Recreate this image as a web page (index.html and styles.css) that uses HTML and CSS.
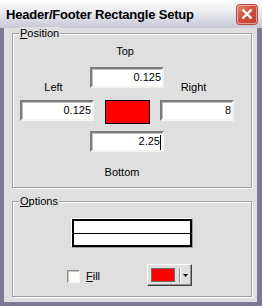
FILE: index.html
```html
<!DOCTYPE html>
<html lang="en">

<head>
    <meta charset="UTF-8">
    <title>Header/Footer Rectangle Setup</title>
    <link rel="stylesheet" href="styles.css">
</head>

<body>
    <div class="window">
        <div class="titlebar">
            <span class="title">Header/Footer Rectangle Setup</span>
            <span class="close">
                <svg width="22" height="21" viewBox="0 0 22 21">
                    <defs>
                        <linearGradient id="closeFill" x1="0" y1="0" x2="1" y2="1">
                            <stop offset="0" stop-color="#e58a78" />
                            <stop offset="0.45" stop-color="#d4513f" />
                            <stop offset="1" stop-color="#bb3a2c" />
                        </linearGradient>
                    </defs>
                    <rect x="0.5" y="0.5" width="21" height="20" rx="3" fill="url(#closeFill)" stroke="#b04a40" />
                    <rect x="1.5" y="1.5" width="19" height="18" rx="2" fill="none" stroke="#f3c9c2" stroke-opacity="0.7" />
                    <path d="M6.5 5.5L15.5 14.5M15.5 5.5L6.5 14.5" stroke="#fff" stroke-width="2.4" />
                </svg>
            </span>
        </div>

        <div class="frame">
            <!-- Position -->
            <div class="group group-position">
                <div class="group-title"><u>P</u>osition</div>
                <div class="cross">
                    <div class="side">
                        <div class="side-label">Left</div>
                        <div class="field">0.125</div>
                    </div>
                    <div class="center">
                        <div class="top-label">Top</div>
                        <div class="field">0.125</div>
                        <div class="swatch"></div>
                        <div class="field">2.25<span class="caret"></span></div>
                        <div class="bottom-label">Bottom</div>
                    </div>
                    <div class="side">
                        <div class="side-label">Right</div>
                        <div class="field">8</div>
                    </div>
                </div>
            </div>

            <!-- Options -->
            <div class="group group-options">
                <div class="group-title"><u>O</u>ptions</div>
                <div class="linestyle">
                    <div class="line-cell"></div>
                    <div class="line-cell"></div>
                </div>
                <div class="options-row">
                    <div class="check-wrap">
                        <span class="checkbox"></span>
                        <span class="fill-label"><u>F</u>ill</span>
                    </div>
                    <div class="color-btn">
                        <span class="color-swatch"></span>
                        <span class="sep"></span>
                        <svg class="arrow" width="5" height="3" viewBox="0 0 5 3">
                            <path d="M0 0H5L2.5 3Z" fill="#000" />
                        </svg>
                    </div>
                </div>
            </div>
        </div>
    </div>
</body>

</html>
```

FILE: styles.css
```css
body {
    margin: 0;
    font-family: "Liberation Sans", Arial, sans-serif;
    font-size: 11px;
    color: #000;
}

.window {
    width: 262px;
    height: 306px;
    display: flex;
    flex-direction: column;
}

.titlebar {
    height: 28px;
    flex: none;
    box-sizing: border-box;
    display: flex;
    align-items: center;
    justify-content: space-between;
    padding: 0 4px 0 6px;
    background: linear-gradient(#fdfdfe, #ececf1 40%, #c8c8d6);
}

.title {
    font-weight: bold;
    font-size: 13px;
    letter-spacing: -0.2px;
}

.close {
    display: flex;
}

.frame {
    flex: 1;
    border-style: solid;
    border-color: #7a7a92;
    border-width: 0 5px 4px 4px;
    background: #dfdfdf;
    padding: 5px 0 0 8px;
}

.group {
    box-sizing: border-box;
    width: 240px;
    border: 1px solid #a0a0a0;
    box-shadow: 1px 1px 0 #fff, inset 1px 1px 0 #fff;
    padding-left: 7px;
}

.group-title {
    display: table;
    margin: -7px 0 0 -1px;
    padding: 0 1px;
    line-height: 13px;
    background: #dfdfdf;
}

.group-position {
    height: 155px;
}

.group-options {
    height: 96px;
    margin-top: 13px;
}

/* Position */
.cross {
    display: flex;
    margin-top: 5px;
}

.side {
    width: 74px;
    padding-top: 36px;
}

.side-label {
    line-height: 13px;
    text-align: center;
    padding-right: 7px;
    margin-bottom: 6px;
}

.center {
    width: 74px;
    margin: 0 -4px;
    display: flex;
    flex-direction: column;
    align-items: center;
}

.top-label {
    line-height: 13px;
    padding-right: 4px;
    margin-bottom: 9px;
}

.bottom-label {
    line-height: 13px;
    padding-right: 10px;
    margin-top: 14px;
}

.field {
    box-sizing: border-box;
    width: 74px;
    height: 21px;
    background: #fff;
    border: 2px solid;
    border-color: #7c7c7c #f4f4ee #f4f4ee #7c7c7c;
    box-shadow: inset 1px 1px 0 #c0c0c0;
    text-align: right;
    padding-right: 1px;
    line-height: 17px;
}

.caret {
    display: inline-block;
    width: 1px;
    height: 15px;
    background: #000;
    vertical-align: middle;
}

.swatch {
    box-sizing: border-box;
    width: 45px;
    height: 24px;
    border: 1px solid #000;
    background: #ff0000;
    margin: 12px 0 7px;
}

/* Options */
.linestyle {
    box-sizing: border-box;
    width: 122px;
    height: 30px;
    margin: 10px 0 0 51px;
    border: 1px solid;
    border-color: #fff #a0a0a0 #a0a0a0 #fff;
    display: flex;
    flex-direction: column;
}

.line-cell {
    flex: 1;
    background: #fff;
    border: 2px solid #000;
}

.line-cell:first-child {
    border-bottom: 1px solid #000;
}

.line-cell:last-child {
    border-top: 0;
}

.options-row {
    display: flex;
    align-items: center;
    height: 22px;
    margin-top: 16px;
    padding-left: 47px;
}

.check-wrap {
    width: 80px;
    display: flex;
    align-items: center;
    margin-top: 2px;
}

.checkbox {
    box-sizing: border-box;
    width: 13px;
    height: 13px;
    border: 1px solid;
    border-color: #8a8a8a #f4f4f4 #f4f4f4 #8a8a8a;
    box-shadow: inset 1px 1px 0 #c8c8c8;
    background: #fdfdf8;
}

.fill-label {
    margin-left: 6px;
    line-height: 13px;
}

.color-btn {
    box-sizing: border-box;
    width: 45px;
    height: 22px;
    display: flex;
    align-items: center;
    padding-left: 3px;
    border: 1px solid;
    border-color: #fff #404040 #404040 #fff;
    box-shadow: inset -1px -1px 0 #909090;
}

.color-swatch {
    box-sizing: border-box;
    width: 24px;
    height: 14px;
    border: 1px solid #707070;
    background: #ff0000;
}

.sep {
    width: 1px;
    height: 15px;
    margin-left: 4px;
    background: #909090;
    border-right: 1px solid #fff;
}

.arrow {
    margin-left: 2px;
}
```
